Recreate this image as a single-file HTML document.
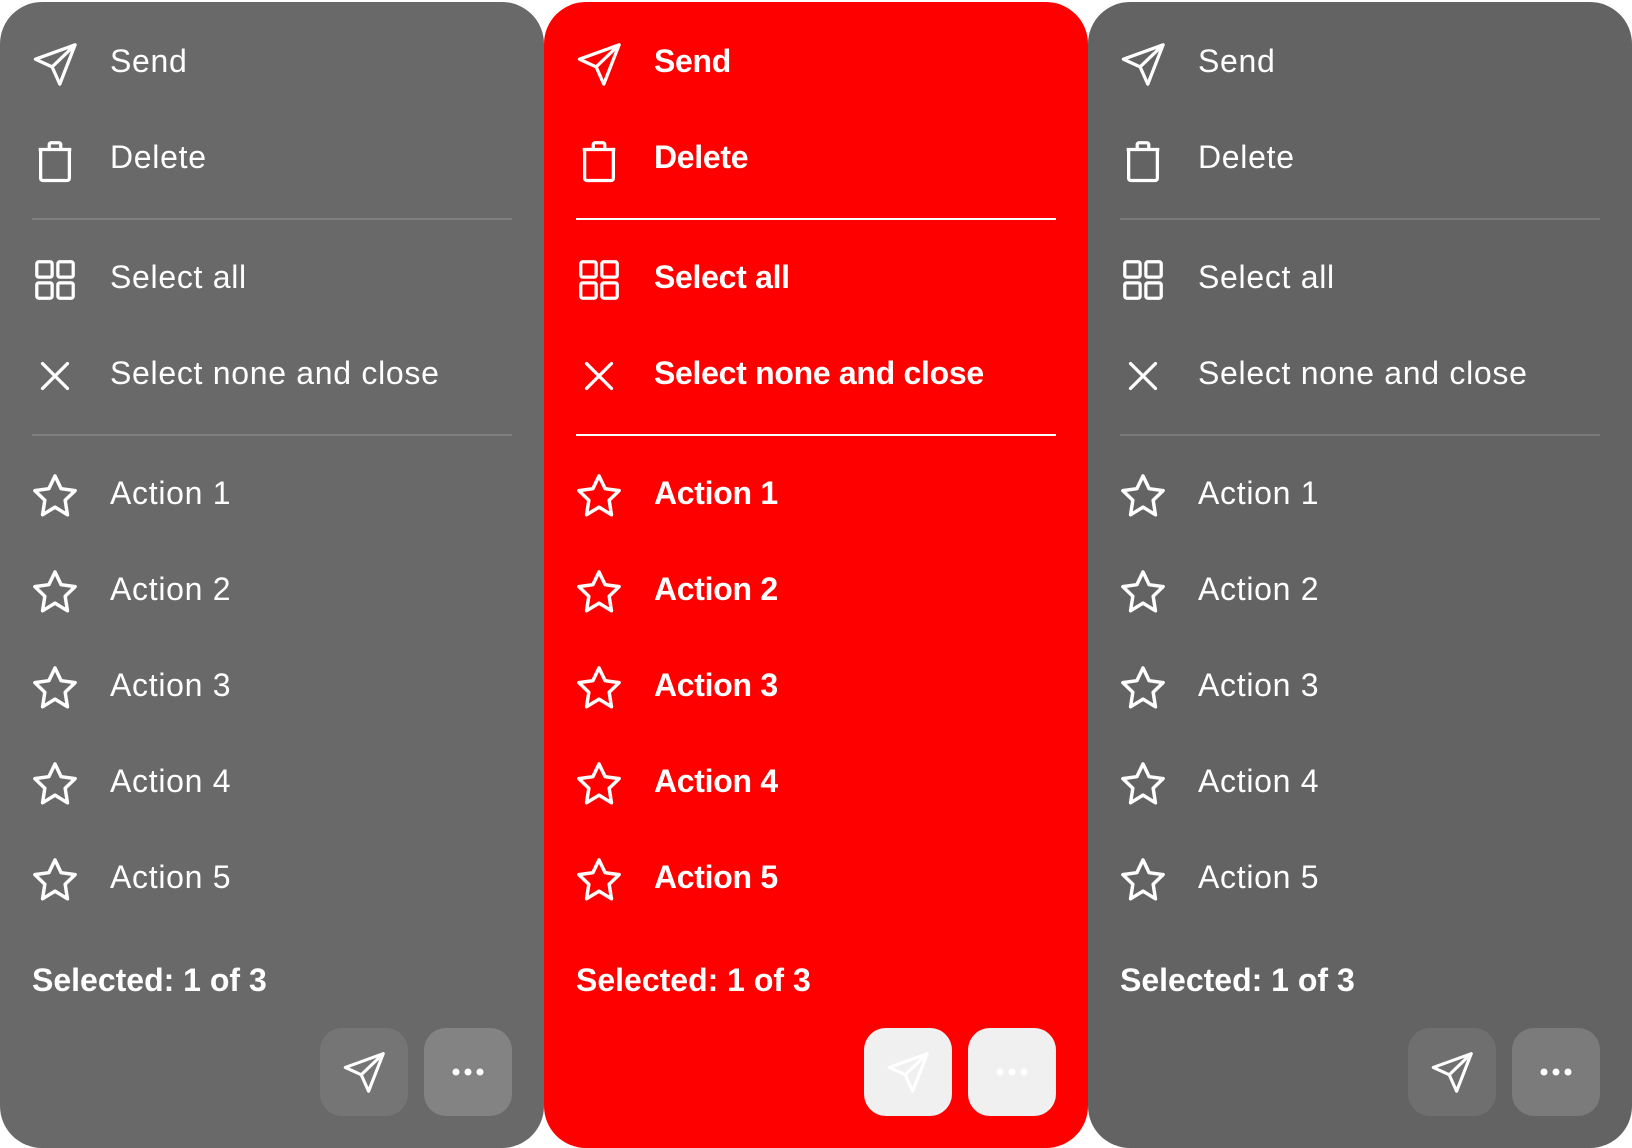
<!DOCTYPE html>
<html><head><meta charset="utf-8"><style>
*{margin:0;padding:0;box-sizing:border-box}
body{width:1632px;height:1148px;background:#fff;position:relative;overflow:hidden;font-family:"Liberation Sans",sans-serif;color:#fff}
.p{position:absolute;top:2px;width:544px;height:1146px;border-radius:42px}
.row{position:absolute;left:32px;height:60px;display:flex;align-items:center}
.row svg{width:46px;height:46px;margin-right:32px;flex:none}
.row span{font-size:32px;letter-spacing:0.7px;position:relative;top:-3px}
.div{position:absolute;left:32px;right:32px;height:2px}
.sel{position:absolute;left:32px;top:960px;font-size:32px;font-weight:bold;letter-spacing:0px}
.btn{position:absolute;top:1026px;width:88px;height:88px;border-radius:22px;display:flex;align-items:center;justify-content:center}
.b1{right:136px}.b2{right:32px}
.red span{font-weight:bold;letter-spacing:-0.3px}
</style></head><body>
<svg width="0" height="0" style="position:absolute"><defs>
<g id="send" fill="none" stroke="#fff" stroke-width="1.7" stroke-linejoin="round" stroke-linecap="round"><path d="M22.5 2 L1.8 9.5 L10.5 13.5 L14.5 22.5 Z M10.5 13.5 L22.5 2"/></g>
<g id="del" fill="none" stroke="#fff" stroke-width="1.7" stroke-linejoin="round"><path d="M4.5 6.5 H19.5 V21.5 A1.2 1.2 0 0 1 18.3 22.7 H5.7 A1.2 1.2 0 0 1 4.5 21.5 Z M3.5 6.5 H20.5 M9 6.5 V4 A1 1 0 0 1 10 3 H14 A1 1 0 0 1 15 4 V6.5"/></g>
<g id="grid" fill="none" stroke="#fff" stroke-width="1.7"><rect x="2.5" y="2.5" width="8" height="8" rx="1"/><rect x="13.5" y="2.5" width="8" height="8" rx="1"/><rect x="2.5" y="13.5" width="8" height="8" rx="1"/><rect x="13.5" y="13.5" width="8" height="8" rx="1"/></g>
<g id="x" fill="none" stroke="#fff" stroke-width="1.7" stroke-linecap="round"><path d="M5.5 5.5 L18.5 18.5 M18.5 5.5 L5.5 18.5"/></g>
<g id="star" fill="none" stroke="#fff" stroke-width="1.8" stroke-linejoin="round"><path d="M12 1.5 L15.2 8.2 L22.5 9.2 L17.3 14.2 L18.5 21.8 L12 17.8 L5.5 21.8 L6.7 14.2 L1.5 9.2 L8.8 8.2 Z"/></g>
</defs></svg>

<div class="p" style="left:0;background:#696969">
<div class="row" style="top:32px"><svg viewBox="0 0 24 24"><use href="#send"/></svg><span>Send</span></div>
<div class="row" style="top:128px"><svg viewBox="0 0 24 24"><use href="#del"/></svg><span>Delete</span></div>
<div class="div" style="top:216px;background:#7f7f7f"></div>
<div class="row" style="top:248px"><svg viewBox="0 0 24 24"><use href="#grid"/></svg><span>Select all</span></div>
<div class="row" style="top:344px"><svg viewBox="0 0 24 24"><use href="#x"/></svg><span>Select none and close</span></div>
<div class="div" style="top:432px;background:#7f7f7f"></div>
<div class="row" style="top:464px"><svg viewBox="0 0 24 24"><use href="#star"/></svg><span>Action 1</span></div>
<div class="row" style="top:560px"><svg viewBox="0 0 24 24"><use href="#star"/></svg><span>Action 2</span></div>
<div class="row" style="top:656px"><svg viewBox="0 0 24 24"><use href="#star"/></svg><span>Action 3</span></div>
<div class="row" style="top:752px"><svg viewBox="0 0 24 24"><use href="#star"/></svg><span>Action 4</span></div>
<div class="row" style="top:848px"><svg viewBox="0 0 24 24"><use href="#star"/></svg><span>Action 5</span></div>
<div class="sel">Selected: 1 of 3</div>
<div class="btn b1" style="background:#757575"><svg width="44" height="44" viewBox="0 0 24 24"><use href="#send"/></svg></div>
<div class="btn b2" style="background:#838383"><svg width="40" height="12" viewBox="0 0 40 12"><circle cx="8" cy="6" r="3.5" fill="#fff"/><circle cx="20" cy="6" r="3.5" fill="#fff"/><circle cx="32" cy="6" r="3.5" fill="#fff"/></svg></div>
</div>

<div class="p red" style="left:544px;background:#ff0000">
<div class="row" style="top:32px"><svg viewBox="0 0 24 24"><use href="#send"/></svg><span>Send</span></div>
<div class="row" style="top:128px"><svg viewBox="0 0 24 24"><use href="#del"/></svg><span>Delete</span></div>
<div class="div" style="top:216px;background:#fff"></div>
<div class="row" style="top:248px"><svg viewBox="0 0 24 24"><use href="#grid"/></svg><span>Select all</span></div>
<div class="row" style="top:344px"><svg viewBox="0 0 24 24"><use href="#x"/></svg><span>Select none and close</span></div>
<div class="div" style="top:432px;background:#fff"></div>
<div class="row" style="top:464px"><svg viewBox="0 0 24 24"><use href="#star"/></svg><span>Action 1</span></div>
<div class="row" style="top:560px"><svg viewBox="0 0 24 24"><use href="#star"/></svg><span>Action 2</span></div>
<div class="row" style="top:656px"><svg viewBox="0 0 24 24"><use href="#star"/></svg><span>Action 3</span></div>
<div class="row" style="top:752px"><svg viewBox="0 0 24 24"><use href="#star"/></svg><span>Action 4</span></div>
<div class="row" style="top:848px"><svg viewBox="0 0 24 24"><use href="#star"/></svg><span>Action 5</span></div>
<div class="sel">Selected: 1 of 3</div>
<div class="btn b1" style="background:#f0f0f0"><svg width="44" height="44" viewBox="0 0 24 24"><use href="#send"/></svg></div>
<div class="btn b2" style="background:#f0f0f0"><svg width="40" height="12" viewBox="0 0 40 12"><circle cx="8" cy="6" r="3.5" fill="#fff"/><circle cx="20" cy="6" r="3.5" fill="#fff"/><circle cx="32" cy="6" r="3.5" fill="#fff"/></svg></div>
</div>

<div class="p" style="left:1088px;background:#636363">
<div class="row" style="top:32px"><svg viewBox="0 0 24 24"><use href="#send"/></svg><span>Send</span></div>
<div class="row" style="top:128px"><svg viewBox="0 0 24 24"><use href="#del"/></svg><span>Delete</span></div>
<div class="div" style="top:216px;background:#7a7a7a"></div>
<div class="row" style="top:248px"><svg viewBox="0 0 24 24"><use href="#grid"/></svg><span>Select all</span></div>
<div class="row" style="top:344px"><svg viewBox="0 0 24 24"><use href="#x"/></svg><span>Select none and close</span></div>
<div class="div" style="top:432px;background:#7a7a7a"></div>
<div class="row" style="top:464px"><svg viewBox="0 0 24 24"><use href="#star"/></svg><span>Action 1</span></div>
<div class="row" style="top:560px"><svg viewBox="0 0 24 24"><use href="#star"/></svg><span>Action 2</span></div>
<div class="row" style="top:656px"><svg viewBox="0 0 24 24"><use href="#star"/></svg><span>Action 3</span></div>
<div class="row" style="top:752px"><svg viewBox="0 0 24 24"><use href="#star"/></svg><span>Action 4</span></div>
<div class="row" style="top:848px"><svg viewBox="0 0 24 24"><use href="#star"/></svg><span>Action 5</span></div>
<div class="sel">Selected: 1 of 3</div>
<div class="btn b1" style="background:#6f6f6f"><svg width="44" height="44" viewBox="0 0 24 24"><use href="#send"/></svg></div>
<div class="btn b2" style="background:#7b7b7b"><svg width="40" height="12" viewBox="0 0 40 12"><circle cx="8" cy="6" r="3.5" fill="#fff"/><circle cx="20" cy="6" r="3.5" fill="#fff"/><circle cx="32" cy="6" r="3.5" fill="#fff"/></svg></div>
</div>
</body></html>
